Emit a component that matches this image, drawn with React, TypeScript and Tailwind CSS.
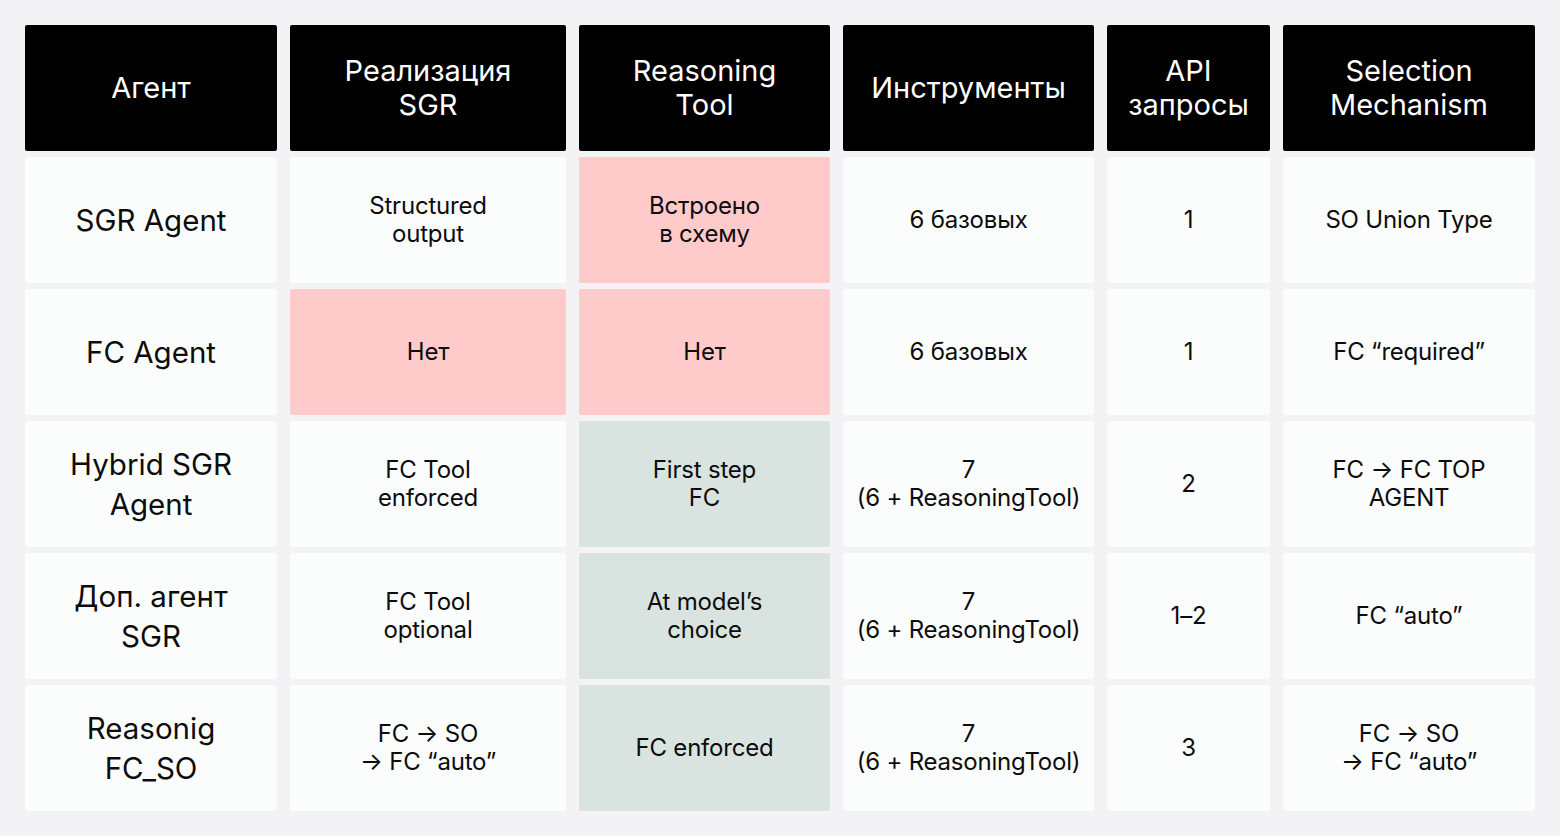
const headers = [
  "Агент",
  "Реализация\nSGR",
  "Reasoning\nTool",
  "Инструменты",
  "API\nзапросы",
  "Selection\nMechanism",
];

type Tone = "plain" | "pink" | "green";
type Cell = { text: string; tone?: Tone };

const rows: Cell[][] = [
  [
    { text: "SGR Agent" },
    { text: "Structured\noutput" },
    { text: "Встроено\nв схему", tone: "pink" },
    { text: "6 базовых" },
    { text: "1" },
    { text: "SO Union Type" },
  ],
  [
    { text: "FC Agent" },
    { text: "Нет", tone: "pink" },
    { text: "Нет", tone: "pink" },
    { text: "6 базовых" },
    { text: "1" },
    { text: "FC “required”" },
  ],
  [
    { text: "Hybrid SGR\nAgent" },
    { text: "FC Tool\nenforced" },
    { text: "First step\nFC", tone: "green" },
    { text: "7\n(6 + ReasoningTool)" },
    { text: "2" },
    { text: "FC → FC TOP\nAGENT" },
  ],
  [
    { text: "Доп. агент\nSGR" },
    { text: "FC Tool\noptional" },
    { text: "At model’s\nchoice", tone: "green" },
    { text: "7\n(6 + ReasoningTool)" },
    { text: "1–2" },
    { text: "FC “auto”" },
  ],
  [
    { text: "Reasonig\nFC_SO" },
    { text: "FC → SO\n→ FC “auto”" },
    { text: "FC enforced", tone: "green" },
    { text: "7\n(6 + ReasoningTool)" },
    { text: "3" },
    { text: "FC → SO\n→ FC “auto”" },
  ],
];

const toneBg: Record<Tone, string> = {
  plain: "bg-[#fbfcfc]",
  pink: "bg-[#ffcaca]",
  green: "bg-[#d9e4e0]",
};

export default function App() {
  return (
    <div
      className="min-h-[836px] w-[1560px] bg-[#f3f3f5] p-[25px]"
      style={{ fontFamily: "Inter, 'Noto Sans', sans-serif" }}
    >
      <div className="grid grid-cols-[252px_276px_251px_251px_163px_252px] auto-rows-[126px] gap-x-[13px] gap-y-[6px]">
        {headers.map((h) => (
          <div
            key={h}
            className="flex items-center justify-center whitespace-pre-line rounded-[2px] bg-black text-center text-[29px] leading-[34px] text-white"
          >
            {h}
          </div>
        ))}
        {rows.map((row, ri) =>
          row.map((cell, ci) => (
            <div
              key={`${ri}-${ci}`}
              className={`flex items-center justify-center whitespace-pre-line rounded-[2px] text-center text-[#0c0c0c] ${
                toneBg[cell.tone ?? "plain"]
              } ${
                ci === 0
                  ? "text-[29.5px] leading-[40px]"
                  : "text-[24px] leading-[28px] tracking-[-0.2px]"
              }`}
            >
              {cell.text}
            </div>
          ))
        )}
      </div>
    </div>
  );
}
